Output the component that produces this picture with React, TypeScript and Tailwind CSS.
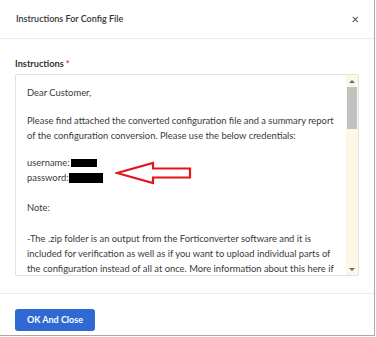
import React from "react";

const noteLines = [
  "-The .zip folder is an output from the Forticonverter software and it is",
  "included for verification as well as if you want to upload individual parts of",
  "the configuration instead of all at once. More information about this here if",
  "you want to do this:",
];

// red outline arrow pasted over the screenshot
function RedArrow() {
  return (
    <svg
      className="pointer-events-none absolute left-[115px] top-[161px]"
      width="78"
      height="24"
      viewBox="0 0 78 24"
    >
      <path
        d="M2 12 L38 2 L38 7.5 L75 7.5 L75 16.5 L38 16.5 L38 22 Z"
        fill="white"
        stroke="#e3141b"
        strokeWidth="2.2"
      />
    </svg>
  );
}

function FakeScrollbar() {
  return (
    <div className="flex w-[12px] flex-col items-center bg-[#fdf7ea]">
      <div className="flex h-[12px] w-full items-center justify-center">
        <div className="h-0 w-0 border-x-[3px] border-b-[3px] border-x-transparent border-b-[#6b6b6b]" />
      </div>
      <div className="h-[42px] w-[10px] bg-[#c1c1c1]" />
      <div className="flex-1" />
      <div className="flex h-[12px] w-full items-center justify-center">
        <div className="h-0 w-0 border-x-[3px] border-t-[3px] border-x-transparent border-t-[#6b6b6b]" />
      </div>
    </div>
  );
}

export default function App() {
  return (
    <div className="relative h-[337px] w-[376px] bg-white font-['Lato','Liberation_Sans',sans-serif] text-[#333]">
      <div className="flex h-[336px] w-[375px] flex-col border-b border-r border-[#a8a8a8] bg-white">
        {/* header */}
        <div className="flex h-[39px] items-center justify-between border-b border-[#ececec] pl-[16px] pr-[15px]">
          <h1 className="text-[9px] font-semibold text-[#333]">Instructions For Config File</h1>
          <span className="text-[13px] leading-none text-[#444]">×</span>
        </div>

        {/* body */}
        <div className="flex-1 px-[15px] pt-[18px]">
          <label className="mb-[3px] block text-[9.2px] font-bold leading-[14px] text-[#333]">
            Instructions<span className="ml-[2px] text-[#e03030]">*</span>
          </label>
          <div className="flex h-[202px] w-[344px] overflow-hidden rounded-[2px] border border-[#e2e2e2]">
            <div className="flex-1 overflow-hidden whitespace-nowrap pl-[11px] pt-[10px] text-[9.4px] leading-[15px] text-[#3a3a3a]">
              <p>Dear Customer,</p>
              <p className="mt-[13px]">
                Please find attached the converted configuration file and a summary report
                <br />
                of the configuration conversion. Please use the below credentials:
              </p>
              <div className="mt-[12px]">
                <div className="flex items-center">
                  username:<span className="ml-[1px] inline-block h-[8px] w-[26px] bg-black" />
                </div>
                <div className="flex items-center">
                  password:<span className="ml-[1px] inline-block h-[10px] w-[34px] bg-black" />
                </div>
              </div>
              <p className="mt-[15px]">Note:</p>
              <p className="mt-[16px]">
                {noteLines.map((l, i) => (
                  <React.Fragment key={i}>
                    {l}
                    <br />
                  </React.Fragment>
                ))}
              </p>
            </div>
            <FakeScrollbar />
          </div>
        </div>

        {/* footer */}
        <div className="h-[42px] border-t border-[#ececec] px-[15px] pt-[11px]">
          <button className="h-[22px] w-[80px] rounded-[3px] bg-[#2f69d3] text-[9px] font-bold text-white">
            OK And Close
          </button>
        </div>
      </div>
      <RedArrow />
    </div>
  );
}
